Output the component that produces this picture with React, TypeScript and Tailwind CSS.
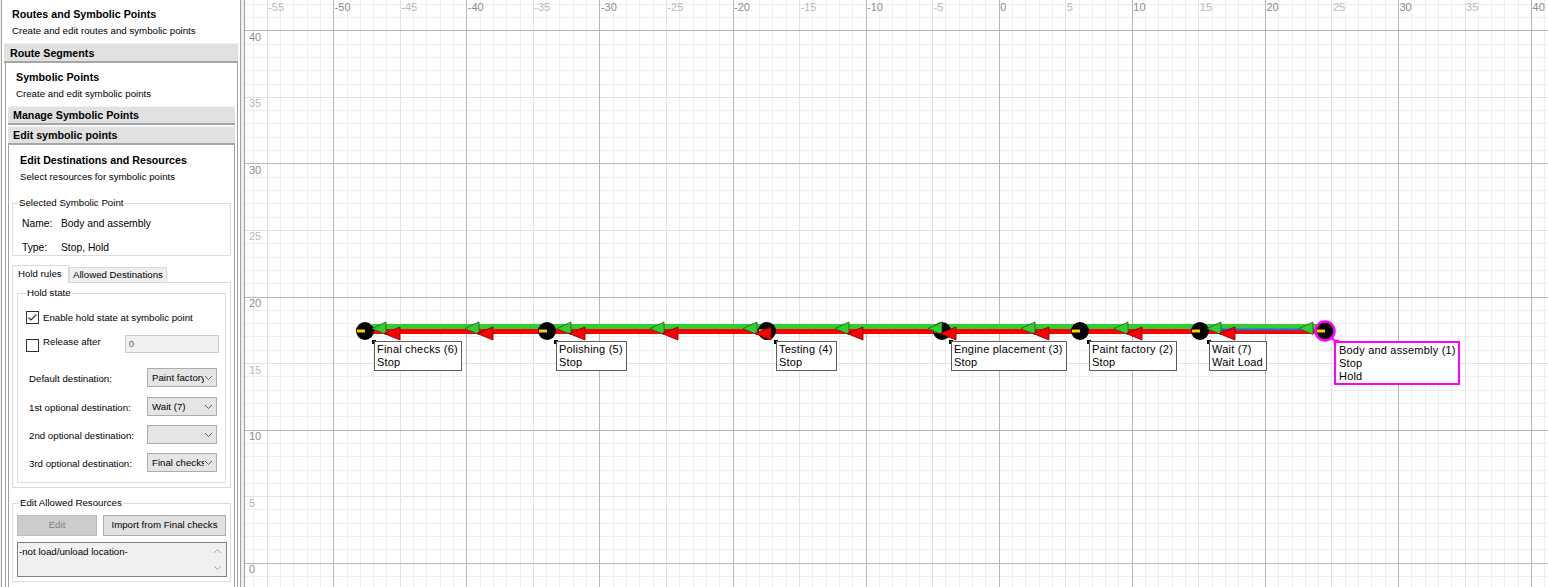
import React from "react";

const S = 13.31;
const X = (u: number) => 998.7 + u * S;
const Y = (u: number) => 562.7 - u * S;
const crisp = (v: number) => Math.round(v) + 0.5;

type Node = { x: number; title: string; lines: string[]; selected?: boolean };

const nodes: Node[] = [
  { x: 365, title: "Final checks (6)", lines: ["Stop"] },
  { x: 547, title: "Polishing (5)", lines: ["Stop"] },
  { x: 767, title: "Testing (4)", lines: ["Stop"] },
  { x: 942, title: "Engine placement (3)", lines: ["Stop"] },
  { x: 1080, title: "Paint factory (2)", lines: ["Stop"] },
  { x: 1200, title: "Wait (7)", lines: ["Wait Load"] },
  { x: 1325, title: "Body and assembly (1)", lines: ["Stop", "Hold"], selected: true },
];

const greenTips = [372, 465, 557, 650, 743, 835, 928, 1021, 1114, 1207, 1299];

function Grid() {
  const minor: React.ReactNode[] = [];
  const mid: React.ReactNode[] = [];
  const major: React.ReactNode[] = [];
  const labels: React.ReactNode[] = [];
  for (let u = -56; u <= 41; u++) {
    const x = crisp(X(u));
    const list = u % 10 === 0 ? major : u % 5 === 0 ? mid : minor;
    const c = u % 10 === 0 ? "#b8b8b8" : u % 5 === 0 ? "#e2e2e2" : "#eeeeee";
    list.push(<line key={"v" + u} x1={x} x2={x} y1={0} y2={587} stroke={c} />);
    if (u % 5 === 0 && u >= -55 && u <= 40) {
      labels.push(
        <text key={"xl" + u} x={X(u) + 1.5} y={11} fontSize={11} fill={u % 10 === 0 ? "#8c8c8c" : "#b9b9b9"}>
          {u}
        </text>
      );
    }
  }
  for (let u = -2; u <= 42; u++) {
    const y = crisp(Y(u));
    const list = u % 10 === 0 ? major : u % 5 === 0 ? mid : minor;
    const c = u % 10 === 0 ? "#b8b8b8" : u % 5 === 0 ? "#e2e2e2" : "#eeeeee";
    list.push(<line key={"h" + u} x1={245} x2={1548} y1={y} y2={y} stroke={c} />);
    if (u % 5 === 0 && u >= 0 && u <= 40) {
      labels.push(
        <text key={"yl" + u} x={249} y={Y(u) + 10.5} fontSize={11} fill={u % 10 === 0 ? "#8c8c8c" : "#b9b9b9"}>
          {u}
        </text>
      );
    }
  }
  return (
    <g fontFamily="'Liberation Sans', Arial, sans-serif">
      {minor}
      {mid}
      {major}
      {labels}
    </g>
  );
}

function Route() {
  return (
    <g>
      <rect x={365} y={329} width={960} height={5} fill="#ff0000" />
      <rect x={372} y={324} width={946} height={5} fill="#33cc33" />
      <rect x={1209} y={328.5} width={110} height={2} fill="#3060e0" />
      {nodes.map((n) => (
        <g key={n.x}>
          <circle cx={n.x} cy={331} r={n.selected ? 9.5 : 9} fill="#000" stroke={n.selected ? "#ff00ff" : "none"} strokeWidth={2.5} />
          <rect x={n.x - 8} y={329.5} width={8} height={3} fill="#ffcc00" />
          {!n.selected && <rect x={n.x + 7} y={340} width={4} height={4} fill="#000" />}
        </g>
      ))}
      <line x1={1332} y1={338} x2={1336.5} y2={343} stroke="#ff00ff" strokeWidth={2} />
      <circle cx={1337} cy={343} r={3.5} fill="#ff00ff" />
      {greenTips.map((t, i) => (
        <g key={t}>
          <polygon points={`${t},328.5 ${t + 14},322 ${t + 14},334.5`} fill="#33cc33" stroke="#1d5e1d" strokeWidth={0.8} />
          {i < greenTips.length - 1 && (
            <polygon points={`${t + 12},333.5 ${t + 28},327 ${t + 28},340`} fill="#ff0000" stroke="#6a0000" strokeWidth={0.8} />
          )}
        </g>
      ))}
    </g>
  );
}

function Canvas() {
  return (
    <div className="relative flex-1 h-full overflow-hidden bg-white border-l border-[#a0a0a0]">
      <svg width={1303} height={587} viewBox="245 0 1303 587" className="block">
        <Grid />
        <Route />
      </svg>
      {nodes.map((n) => (
        <div
          key={n.title}
          className={
            n.selected
              ? "absolute top-[341px] bg-white border-2 border-[#ff00ff] pl-[3px] pr-[2px] pt-[1px] text-[11px] leading-[13px] tracking-[0.2px] whitespace-nowrap text-black"
              : "absolute top-[341px] bg-white border border-[#5c5c5c] pl-[2px] pr-[3px] pt-[1px] pb-[1px] text-[11px] leading-[13px] tracking-[0.2px] whitespace-nowrap text-black"
          }
          style={{ left: n.x + 9 - 245 }}
        >
          <div>{n.title}</div>
          {n.lines.map((l) => (
            <div key={l}>{l}</div>
          ))}
        </div>
      ))}
    </div>
  );
}

function Header({ children }: { children: React.ReactNode }) {
  return (
    <div className="mx-[2px] h-[19px] flex items-center bg-[#e1e1e1] border-t border-t-[#f2f2f2] border-b-2 border-b-[#a6a6a6] pl-[5px] text-[10.7px] font-bold leading-[12px]">
      {children}
    </div>
  );
}

function Chevron() {
  return (
    <svg width="9" height="6" viewBox="0 0 9 6" className="shrink-0">
      <polyline points="1,1 4.5,4.5 8,1" fill="none" stroke="#606060" strokeWidth="1" />
    </svg>
  );
}

function Combo({ value }: { value: string }) {
  return (
    <div className="w-[70px] h-[19px] bg-[#e5e5e5] border border-[#acacac] flex items-center pl-[4px] pr-[3px]">
      <div className="flex-1 overflow-hidden whitespace-nowrap leading-[12px]">{value}</div>
      <Chevron />
    </div>
  );
}

function ComboRow({ label, value, top }: { label: string; value: string; top: string }) {
  return (
    <div className={`${top} flex items-center justify-between pl-[11px] pr-[8px]`}>
      <span className="pt-[3px] leading-[12px]">{label}</span>
      <Combo value={value} />
    </div>
  );
}

function Panel() {
  return (
    <div className="ml-[1px] w-[240px] h-full shrink-0 border-x border-[#a0a0a0] bg-white flex flex-col text-[9.7px] text-black overflow-hidden">
      <div className="pl-[10px] pt-[8px] pb-[6px]">
        <div className="text-[10.7px] font-bold leading-[13px]">Routes and Symbolic Points</div>
        <div className="mt-[4px] leading-[12px]">Create and edit routes and symbolic points</div>
      </div>
      <div className="h-[20px] mx-[2px] flex items-center bg-[#e1e1e1] border-t border-t-[#f2f2f2] border-b-2 border-b-[#a6a6a6] pl-[6px] text-[10.7px] font-bold leading-[12px]">
        Route Segments
      </div>
      <div className="ml-[3px] mr-[2px] flex-1 border-x border-[#a0a0a0] flex flex-col">
        <div className="pl-[10px] pt-[8px] pb-[6px]">
          <div className="text-[10.7px] font-bold leading-[13px]">Symbolic Points</div>
          <div className="mt-[4px] leading-[12px]">Create and edit symbolic points</div>
        </div>
        <Header>Manage Symbolic Points</Header>
        <div className="mt-[1px]">
          <Header>Edit symbolic points</Header>
        </div>
        <div className="mx-[2px] flex-1 border-x border-[#a0a0a0]">
          <div className="pl-[11px] pt-[9px]">
            <div className="text-[10.7px] font-bold leading-[13px]">Edit Destinations and Resources</div>
            <div className="mt-[4px] leading-[12px]">Select resources for symbolic points</div>
          </div>

          <fieldset className="ml-[3px] mt-[14px] w-[219px] border border-[#dcdcdc] pb-[1px]">
            <legend className="ml-[5px] px-[1px] leading-[12px]">Selected Symbolic Point</legend>
            <div className="mt-[9px] flex leading-[12px] text-[10.3px]">
              <span className="ml-[9px] w-[39px]">Name:</span>
              <span>Body and assembly</span>
            </div>
            <div className="mt-[12px] flex leading-[12px] text-[10.3px]">
              <span className="ml-[9px] w-[39px]">Type:</span>
              <span>Stop, Hold</span>
            </div>
          </fieldset>

          <div className="ml-[3px] mt-[9px] h-[17px] flex items-end">
            <div className="relative z-10 -mb-[1px] h-[18px] w-[57px] bg-white border-x border-t border-[#d9d9d9] pl-[5px] pt-[2px] leading-[12px]">
              Hold rules
            </div>
            <div className="h-[15px] w-[98px] bg-[#f0f0f0] border-x border-t border-[#d9d9d9] pl-[3px] pt-[1px] leading-[12px]">
              Allowed Destinations
            </div>
          </div>
          <div className="ml-[3px] w-[219px] h-[206px] border border-[#d9d9d9] bg-white pt-[4px]">
            <fieldset className="mx-[4px] border border-[#dcdcdc] pb-[10px]">
              <legend className="ml-[8px] px-[1px] leading-[12px]">Hold state</legend>
              <div className="mt-[12px] flex items-center pl-[8px]">
                <div className="w-[13px] h-[13px] border border-[#333333] bg-white flex items-center justify-center">
                  <svg width="11" height="11" viewBox="0 0 11 11">
                    <polyline points="1.5,5.5 4,8 9.5,2.5" fill="none" stroke="#333333" strokeWidth="1.2" />
                  </svg>
                </div>
                <span className="ml-[4px] leading-[12px]">Enable hold state at symbolic point</span>
              </div>
              <div className="mt-[11px] h-[18px] flex items-start pl-[8px]">
                <div className="mt-[4px] w-[13px] h-[13px] border border-[#333333] bg-white" />
                <span className="ml-[4px] mt-[1px] leading-[12px]">Release after</span>
                <div className="ml-[24px] w-[94px] h-[18px] bg-[#f0f0f0] border border-[#cccccc] pl-[3px] pt-[2px] leading-[12px] text-[#6d6d6d]">
                  0
                </div>
              </div>
              <ComboRow top="mt-[15px]" label="Default destination:" value="Paint factory (2)" />
              <ComboRow top="mt-[10px]" label="1st optional destination:" value="Wait (7)" />
              <ComboRow top="mt-[9px]" label="2nd optional destination:" value="" />
              <ComboRow top="mt-[9px]" label="3rd optional destination:" value="Final checks (6)" />
            </fieldset>
          </div>

          <fieldset className="ml-[3px] mt-[9px] w-[219px] border border-[#dcdcdc] pb-[4px]">
            <legend className="ml-[6px] px-[1px] leading-[12px]">Edit Allowed Resources</legend>
            <div className="mt-[6px] ml-[4px] flex gap-[6px]">
              <div className="w-[80px] h-[21px] bg-[#cccccc] border border-[#bfbfbf] flex items-center justify-center text-[#838383]">
                Edit
              </div>
              <div className="w-[123px] h-[21px] bg-[#e1e1e1] border border-[#adadad] flex items-center justify-center">
                Import from Final checks
              </div>
            </div>
            <div className="mt-[6px] ml-[4px] w-[210px] h-[35px] bg-[#f0f0f0] border border-[#828282] flex">
              <div className="flex-1 pl-[1px] pt-[3px] leading-[12px]">-not load/unload location-</div>
              <div className="w-[17px] flex flex-col items-center justify-between py-[5px]">
                <svg width="9" height="6" viewBox="0 0 9 6">
                  <polyline points="1,5 4.5,1.5 8,5" fill="none" stroke="#a6a6a6" strokeWidth="1" />
                </svg>
                <svg width="9" height="6" viewBox="0 0 9 6">
                  <polyline points="1,1 4.5,4.5 8,1" fill="none" stroke="#a6a6a6" strokeWidth="1" />
                </svg>
              </div>
            </div>
          </fieldset>
        </div>
      </div>
    </div>
  );
}

export default function App() {
  return (
    <div className="w-[1548px] h-[587px] overflow-hidden flex bg-[#f0f0f0] font-['Liberation_Sans',Arial,sans-serif]">
      <Panel />
      <div className="w-[3px] shrink-0 bg-[#f0f0f0]" />
      <Canvas />
    </div>
  );
}
